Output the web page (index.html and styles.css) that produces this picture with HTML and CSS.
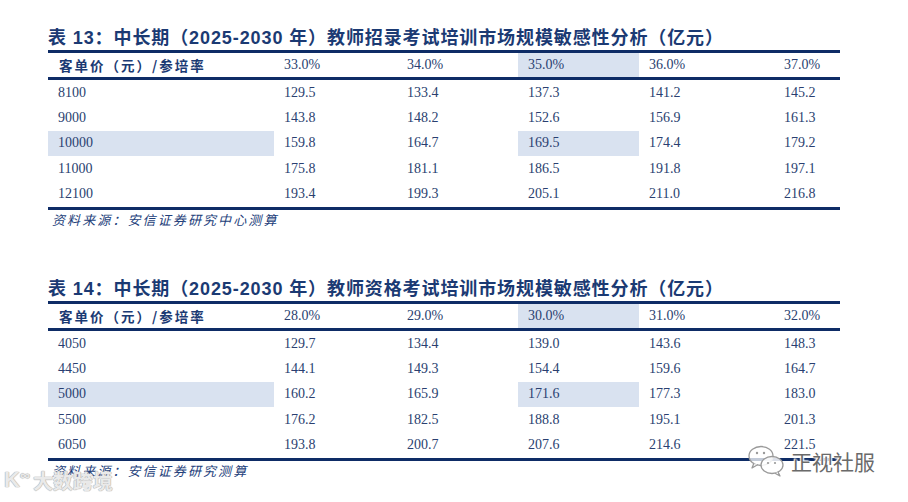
FILE: index.html
```html
<!DOCTYPE html>
<html lang="zh-CN">
<head>
<meta charset="utf-8">
<title>敏感性分析</title>
<link rel="stylesheet" href="styles.css">
</head>
<body>
<div class="page">
  <section class="block">
    <h2 class="title">表 13：中长期（2025-2030 年）教师招录考试培训市场规模敏感性分析（亿元）</h2>
    <div class="table">
      <div class="row head">
        <div class="cell cn">客单价（元）/参培率</div>
        <div class="cell">33.0%</div>
        <div class="cell">34.0%</div>
        <div class="cell hl">35.0%</div>
        <div class="cell">36.0%</div>
        <div class="cell">37.0%</div>
      </div>
      <div class="body">
        <div class="row"><div class="cell">8100</div><div class="cell">129.5</div><div class="cell">133.4</div><div class="cell">137.3</div><div class="cell">141.2</div><div class="cell">145.2</div></div>
        <div class="row"><div class="cell">9000</div><div class="cell">143.8</div><div class="cell">148.2</div><div class="cell">152.6</div><div class="cell">156.9</div><div class="cell">161.3</div></div>
        <div class="row"><div class="cell hl">10000</div><div class="cell">159.8</div><div class="cell">164.7</div><div class="cell hl">169.5</div><div class="cell">174.4</div><div class="cell">179.2</div></div>
        <div class="row"><div class="cell">11000</div><div class="cell">175.8</div><div class="cell">181.1</div><div class="cell">186.5</div><div class="cell">191.8</div><div class="cell">197.1</div></div>
        <div class="row"><div class="cell">12100</div><div class="cell">193.4</div><div class="cell">199.3</div><div class="cell">205.1</div><div class="cell">211.0</div><div class="cell">216.8</div></div>
      </div>
    </div>
    <p class="source">资料来源：安信证券研究中心测算</p>
  </section>

  <section class="block second">
    <h2 class="title">表 14：中长期（2025-2030 年）教师资格考试培训市场规模敏感性分析（亿元）</h2>
    <div class="table">
      <div class="row head">
        <div class="cell cn">客单价（元）/参培率</div>
        <div class="cell">28.0%</div>
        <div class="cell">29.0%</div>
        <div class="cell hl">30.0%</div>
        <div class="cell">31.0%</div>
        <div class="cell">32.0%</div>
      </div>
      <div class="body">
        <div class="row"><div class="cell">4050</div><div class="cell">129.7</div><div class="cell">134.4</div><div class="cell">139.0</div><div class="cell">143.6</div><div class="cell">148.3</div></div>
        <div class="row"><div class="cell">4450</div><div class="cell">144.1</div><div class="cell">149.3</div><div class="cell">154.4</div><div class="cell">159.6</div><div class="cell">164.7</div></div>
        <div class="row"><div class="cell hl">5000</div><div class="cell">160.2</div><div class="cell">165.9</div><div class="cell hl">171.6</div><div class="cell">177.3</div><div class="cell">183.0</div></div>
        <div class="row"><div class="cell">5500</div><div class="cell">176.2</div><div class="cell">182.5</div><div class="cell">188.8</div><div class="cell">195.1</div><div class="cell">201.3</div></div>
        <div class="row"><div class="cell">6050</div><div class="cell">193.8</div><div class="cell">200.7</div><div class="cell">207.6</div><div class="cell">214.6</div><div class="cell">221.5</div></div>
      </div>
    </div>
    <p class="source">资料来源：安信证券研究测算</p>
  </section>

  <div class="wm-left"><span class="wm-logo">K<sup>∞</sup></span><span class="wm-text">大数跨境</span></div>
  <div class="wm-right">
    <svg class="wm-icon" width="38" height="32" viewBox="0 0 38 32">
      <ellipse cx="13" cy="11" rx="12" ry="9.5" fill="rgba(255,255,255,0.75)" stroke="#9a9a9a" stroke-width="1.3"/>
      <path d="M6 18 L4 23 L10 19.5" fill="rgba(255,255,255,0.75)" stroke="#9a9a9a" stroke-width="1.3" stroke-linejoin="round"/>
      <circle cx="9" cy="8" r="1.2" fill="#9a9a9a"/>
      <circle cx="16" cy="8" r="1.2" fill="#9a9a9a"/>
      <ellipse cx="24" cy="20" rx="11" ry="8.5" fill="rgba(255,255,255,0.85)" stroke="#9a9a9a" stroke-width="1.3"/>
      <path d="M30 27 L32 31 L27 28.3" fill="rgba(255,255,255,0.85)" stroke="#9a9a9a" stroke-width="1.3" stroke-linejoin="round"/>
      <circle cx="20" cy="18" r="1.1" fill="#9a9a9a"/>
      <circle cx="27" cy="18" r="1.1" fill="#9a9a9a"/>
    </svg>
    <span class="wm-name">正视社服</span>
  </div>
</div>
</body>
</html>
```

FILE: styles.css
```css
* { box-sizing: border-box; }

html, body {
  margin: 0;
  padding: 0;
  background: #ffffff;
}

.page {
  position: relative;
  width: 908px;
  height: 502px;
  padding: 26px 0 0 48px;
  overflow: hidden;
}

.block {
  width: 792px;
}

.block.second {
  margin-top: 47px;
}

.title {
  margin: 0;
  height: 24px;
  font-family: "Liberation Sans", "Noto Sans CJK SC", sans-serif;
  font-weight: 700;
  font-size: 18px;
  line-height: 24px;
  letter-spacing: 0.9px;
  color: #1b3a73;
  white-space: nowrap;
}

.table {
  border-top: 3px solid #0e2c66;
  border-bottom: 3px solid #0e2c66;
}

.row {
  display: grid;
  grid-template-columns: 226px 123px 121px 121px 135px 66px;
  height: 25.4px;
}

.row.head {
  height: 24px;
  border-bottom: 3px solid #0e2c66;
  box-sizing: content-box;
}

.cell {
  padding-left: 10px;
  display: flex;
  align-items: center;
  font-family: "Liberation Serif", "Noto Sans CJK SC", serif;
  font-size: 14px;
  color: #2a3f70;
  white-space: nowrap;
}

.cell.cn {
  font-family: "Noto Sans CJK SC", sans-serif;
  font-weight: 700;
  font-size: 13.5px;
  letter-spacing: 2px;
  color: #1b3a73;
  padding-left: 11px;
}

.cell.hl {
  background: #d9e2f0;
}

.source {
  margin: 0;
  height: 20px;
  padding-left: 4px;
  font-family: "Noto Sans CJK SC", sans-serif;
  font-style: italic;
  font-size: 13px;
  line-height: 20px;
  letter-spacing: 2.1px;
  color: #23407a;
}

.wm-left {
  position: absolute;
  left: 4px;
  top: 468px;
  display: flex;
  align-items: flex-start;
  gap: 3px;
  color: rgba(240, 240, 240, 0.92);
  font-family: "Noto Sans CJK SC", sans-serif;
  font-weight: 700;
  text-shadow: 0 0 1px #b0b0b0, 0 0 1px #b0b0b0, 0 0 1px #b0b0b0;
}

.wm-logo {
  font-family: "Liberation Sans", sans-serif;
  font-size: 22px;
  line-height: 24px;
}

.wm-logo sup {
  font-size: 14px;
  vertical-align: top;
  line-height: 14px;
}

.wm-text {
  font-size: 20px;
  line-height: 26px;
}

.wm-right {
  position: absolute;
  left: 748px;
  top: 445px;
  display: flex;
  align-items: center;
  gap: 5px;
}

.wm-name {
  font-family: "Noto Sans CJK SC", sans-serif;
  font-size: 21px;
  line-height: 28px;
  font-weight: 400;
  color: #6a6a6a;
  text-shadow: 0 0 2px #fff, 0 0 2px #fff, 1px 1px 1px #fff, -1px -1px 1px #fff;
}
```
